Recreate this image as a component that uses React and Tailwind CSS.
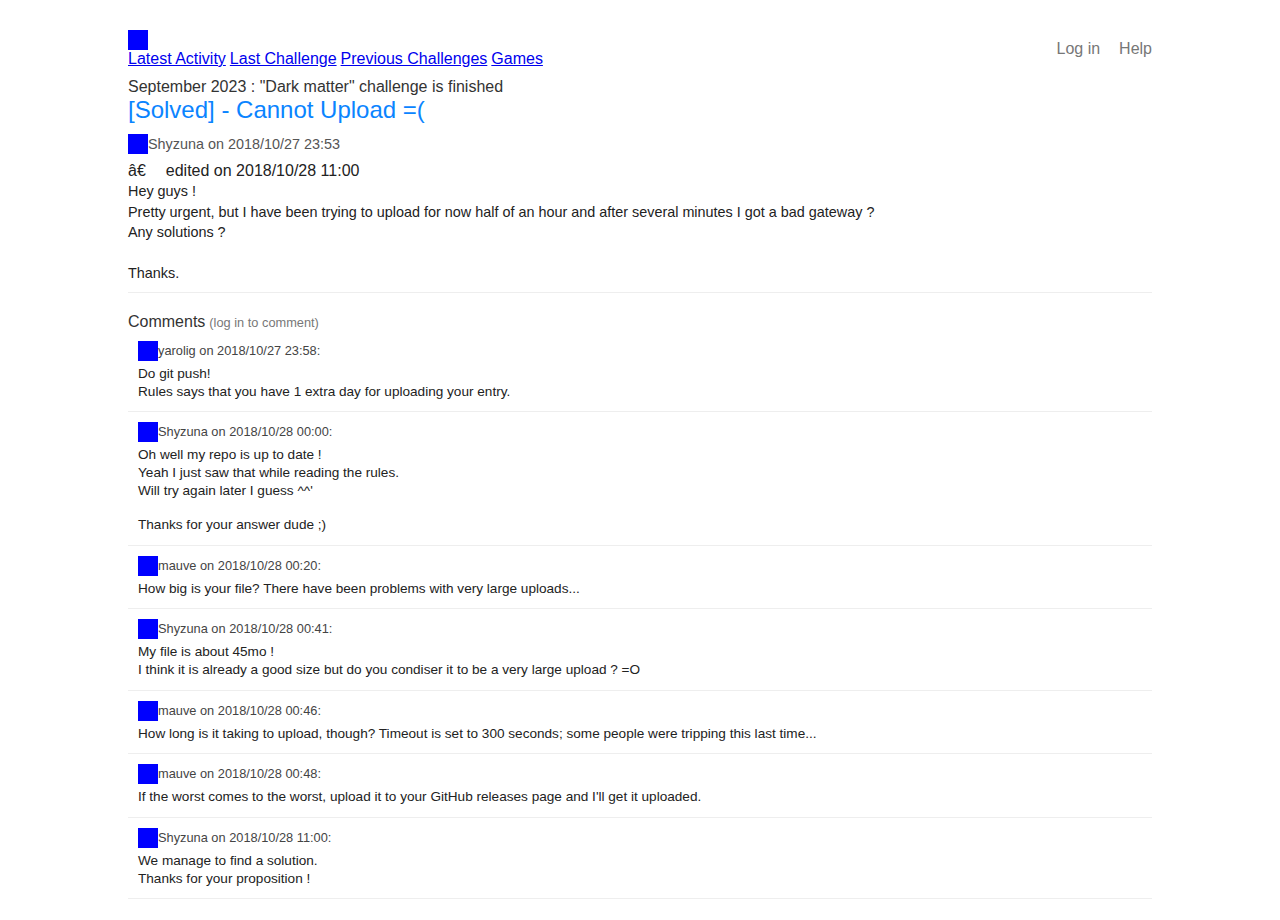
const comments = [
  {
    author: "yarolig",
    date: "2018/10/27 23:58",
    lines: ["Do git push!", "Rules says that you have 1 extra day for uploading your entry."],
  },
  {
    author: "Shyzuna",
    date: "2018/10/28 00:00",
    lines: [
      "Oh well my repo is up to date !",
      "Yeah I just saw that while reading the rules.",
      "Will try again later I guess ^^'",
      "",
      "Thanks for your answer dude ;)",
    ],
  },
  {
    author: "mauve",
    date: "2018/10/28 00:20",
    lines: ["How big is your file? There have been problems with very large uploads..."],
  },
  {
    author: "Shyzuna",
    date: "2018/10/28 00:41",
    lines: [
      "My file is about 45mo !",
      "I think it is already a good size but do you condiser it to be a very large upload ? =O",
    ],
  },
  {
    author: "mauve",
    date: "2018/10/28 00:46",
    lines: [
      "How long is it taking to upload, though? Timeout is set to 300 seconds; some people were tripping this last time...",
    ],
  },
  {
    author: "mauve",
    date: "2018/10/28 00:48",
    lines: ["If the worst comes to the worst, upload it to your GitHub releases page and I'll get it uploaded."],
  },
  {
    author: "Shyzuna",
    date: "2018/10/28 11:00",
    lines: ["We manage to find a solution.", "Thanks for your proposition !"],
  },
];

function Avatar() {
  return <div className="w-5 h-5 bg-[#0000ff] shrink-0" />;
}

function Comment({ author, date, lines }) {
  return (
    <div className="pl-[10px] pt-[10px] pb-[10.5px] border-b border-[#eeeeee]">
      <div className="flex items-center h-5">
        <Avatar />
        <span className="text-[12.8px] leading-[16px] text-[#444]">
          {author} on {date}:
        </span>
      </div>
      <div className="mt-[4px] text-[13.6px] leading-[18px] text-[#222]">
        {lines.map((l, i) =>
          l ? (
            <div key={i}>{l}</div>
          ) : (
            <div key={i} className="h-[16px]" />
          )
        )}
      </div>
    </div>
  );
}

export default function App() {
  return (
    <div className="min-h-[920px] bg-white font-['Liberation_Sans',Arial,sans-serif] text-[#333]">
      <div className="w-[1024px] mx-auto pt-[30px]">
        {/* header */}
        <div className="flex justify-between items-start">
          <div>
            <div className="w-5 h-5 bg-[#0000ff]" />
            <nav className="text-[16px] leading-[18px] flex gap-[4px]">
              <a href="#" className="text-[#0000ee] underline">Latest Activity</a>
              <a href="#" className="text-[#0000ee] underline">Last Challenge</a>
              <a href="#" className="text-[#0000ee] underline">Previous Challenges</a>
              <a href="#" className="text-[#0000ee] underline">Games</a>
            </nav>
          </div>
          <div className="flex gap-[19px] text-[16px] leading-[18px] text-[#777] mt-[10px]">
            <span>Log in</span>
            <span>Help</span>
          </div>
        </div>

        <div className="mt-[10px] text-[16px] leading-[18px] text-[#333]">
          September 2023 : "Dark matter" challenge is finished
        </div>
        <h1 className="text-[24px] leading-[28px] text-[#0a84ff]">[Solved] - Cannot Upload =(</h1>

        {/* post */}
        <div className="mt-[10px] flex items-center h-5">
          <Avatar />
          <span className="text-[14.4px] leading-[16px] text-[#555]">Shyzuna on 2018/10/27 23:53</span>
        </div>
        <div className="mt-[7px] text-[16px] leading-[20px] text-[#222]">
          â€<span className="ml-[20px]">edited on 2018/10/28 11:00</span>
        </div>
        <div className="text-[14.4px] leading-[20.5px] text-[#222] pb-[8px] border-b border-[#eeeeee]">
          <div>Hey guys !</div>
          <div>
            Pretty urgent, but I have been trying to upload for now half of an hour and after several minutes I got a
            bad gateway ?
          </div>
          <div>Any solutions ?</div>
          <div className="h-[20.5px]" />
          <div>Thanks.</div>
        </div>

        {/* comments */}
        <div className="mt-[20px] flex items-baseline gap-[4px]">
          <span className="text-[16px] leading-[18px] text-[#333]">Comments</span>
          <span className="text-[12.8px] text-[#777]">(log in to comment)</span>
        </div>
        <div className="-mt-[1px]">
          {comments.map((c, i) => (
            <Comment key={i} {...c} />
          ))}
        </div>
      </div>
    </div>
  );
}
